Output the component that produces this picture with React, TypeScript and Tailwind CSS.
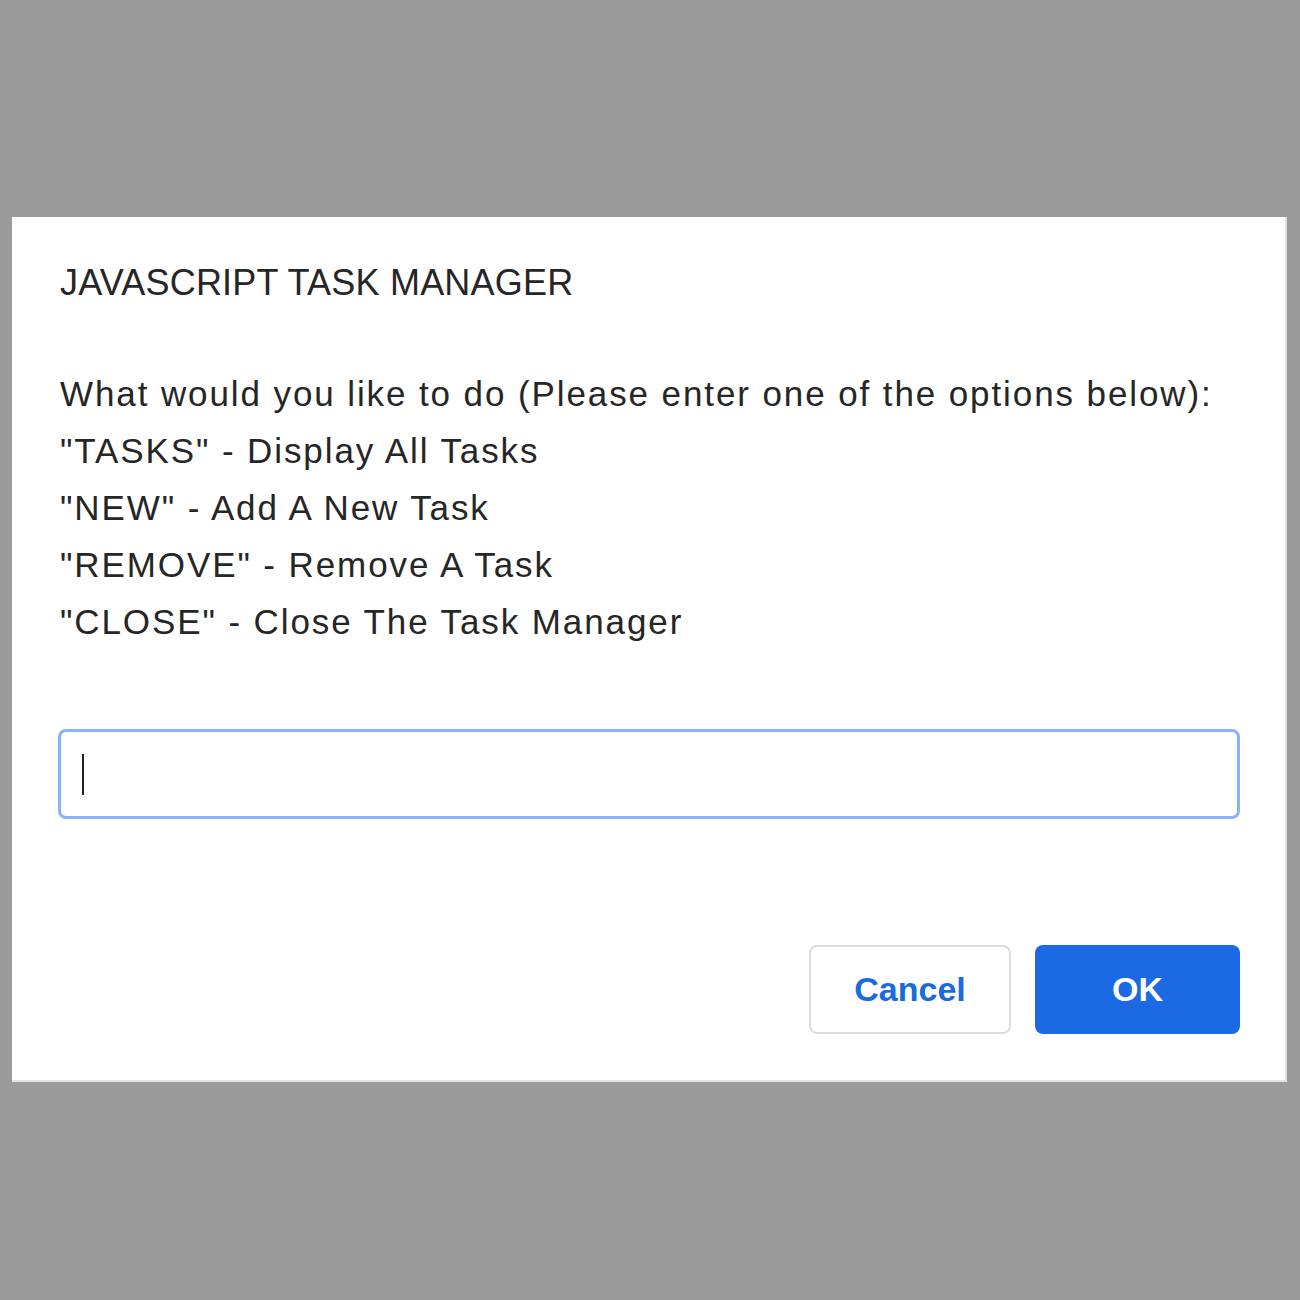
import React from "react";

const options = [
  "What would you like to do (Please enter one of the options below):",
  '"TASKS" - Display All Tasks',
  '"NEW" - Add A New Task',
  '"REMOVE" - Remove A Task',
  '"CLOSE" - Close The Task Manager',
];

const App: React.FC = () => {
  return (
    <div className="min-h-[1300px] bg-[#9b9b9b] pt-[217px] pl-[12px] pr-[13px] font-['Liberation_Sans',Arial,sans-serif]">
      <div className="h-[865px] bg-white border-r-2 border-b-2 border-[#e2e2e2] pl-[46px] pr-[45px] pt-[46px] flex flex-col">
        {/* title */}
        <h1 className="text-[36px] leading-[40px] tracking-[0.2px] text-[#262626] pl-[2px]">JAVASCRIPT TASK MANAGER</h1>

        {/* prompt text */}
        <div className="mt-[62px] pl-[2px] text-[35px] leading-[57px] tracking-[1.9px] text-[#262626]">
          {options.map((line) => (
            <p key={line}>{line}</p>
          ))}
        </div>

        {/* input */}
        <div className="mt-[79px] h-[90px] rounded-[8px] border-[3px] border-[#8ab4f8] flex items-center pl-[21px]">
          <span className="w-[2px] h-[41px] bg-[#222]" />
        </div>

        {/* buttons */}
        <div className="mt-[126px] flex justify-end gap-[24px]">
          <button className="w-[202px] h-[89px] rounded-[8px] border-2 border-[#dcdcdc] bg-white text-[34px] font-bold text-[#1a6ae0]">
            Cancel
          </button>
          <button className="w-[205px] h-[89px] rounded-[8px] bg-[#1b6ae3] text-[34px] font-bold text-white">
            OK
          </button>
        </div>
      </div>
    </div>
  );
};

export default App;
